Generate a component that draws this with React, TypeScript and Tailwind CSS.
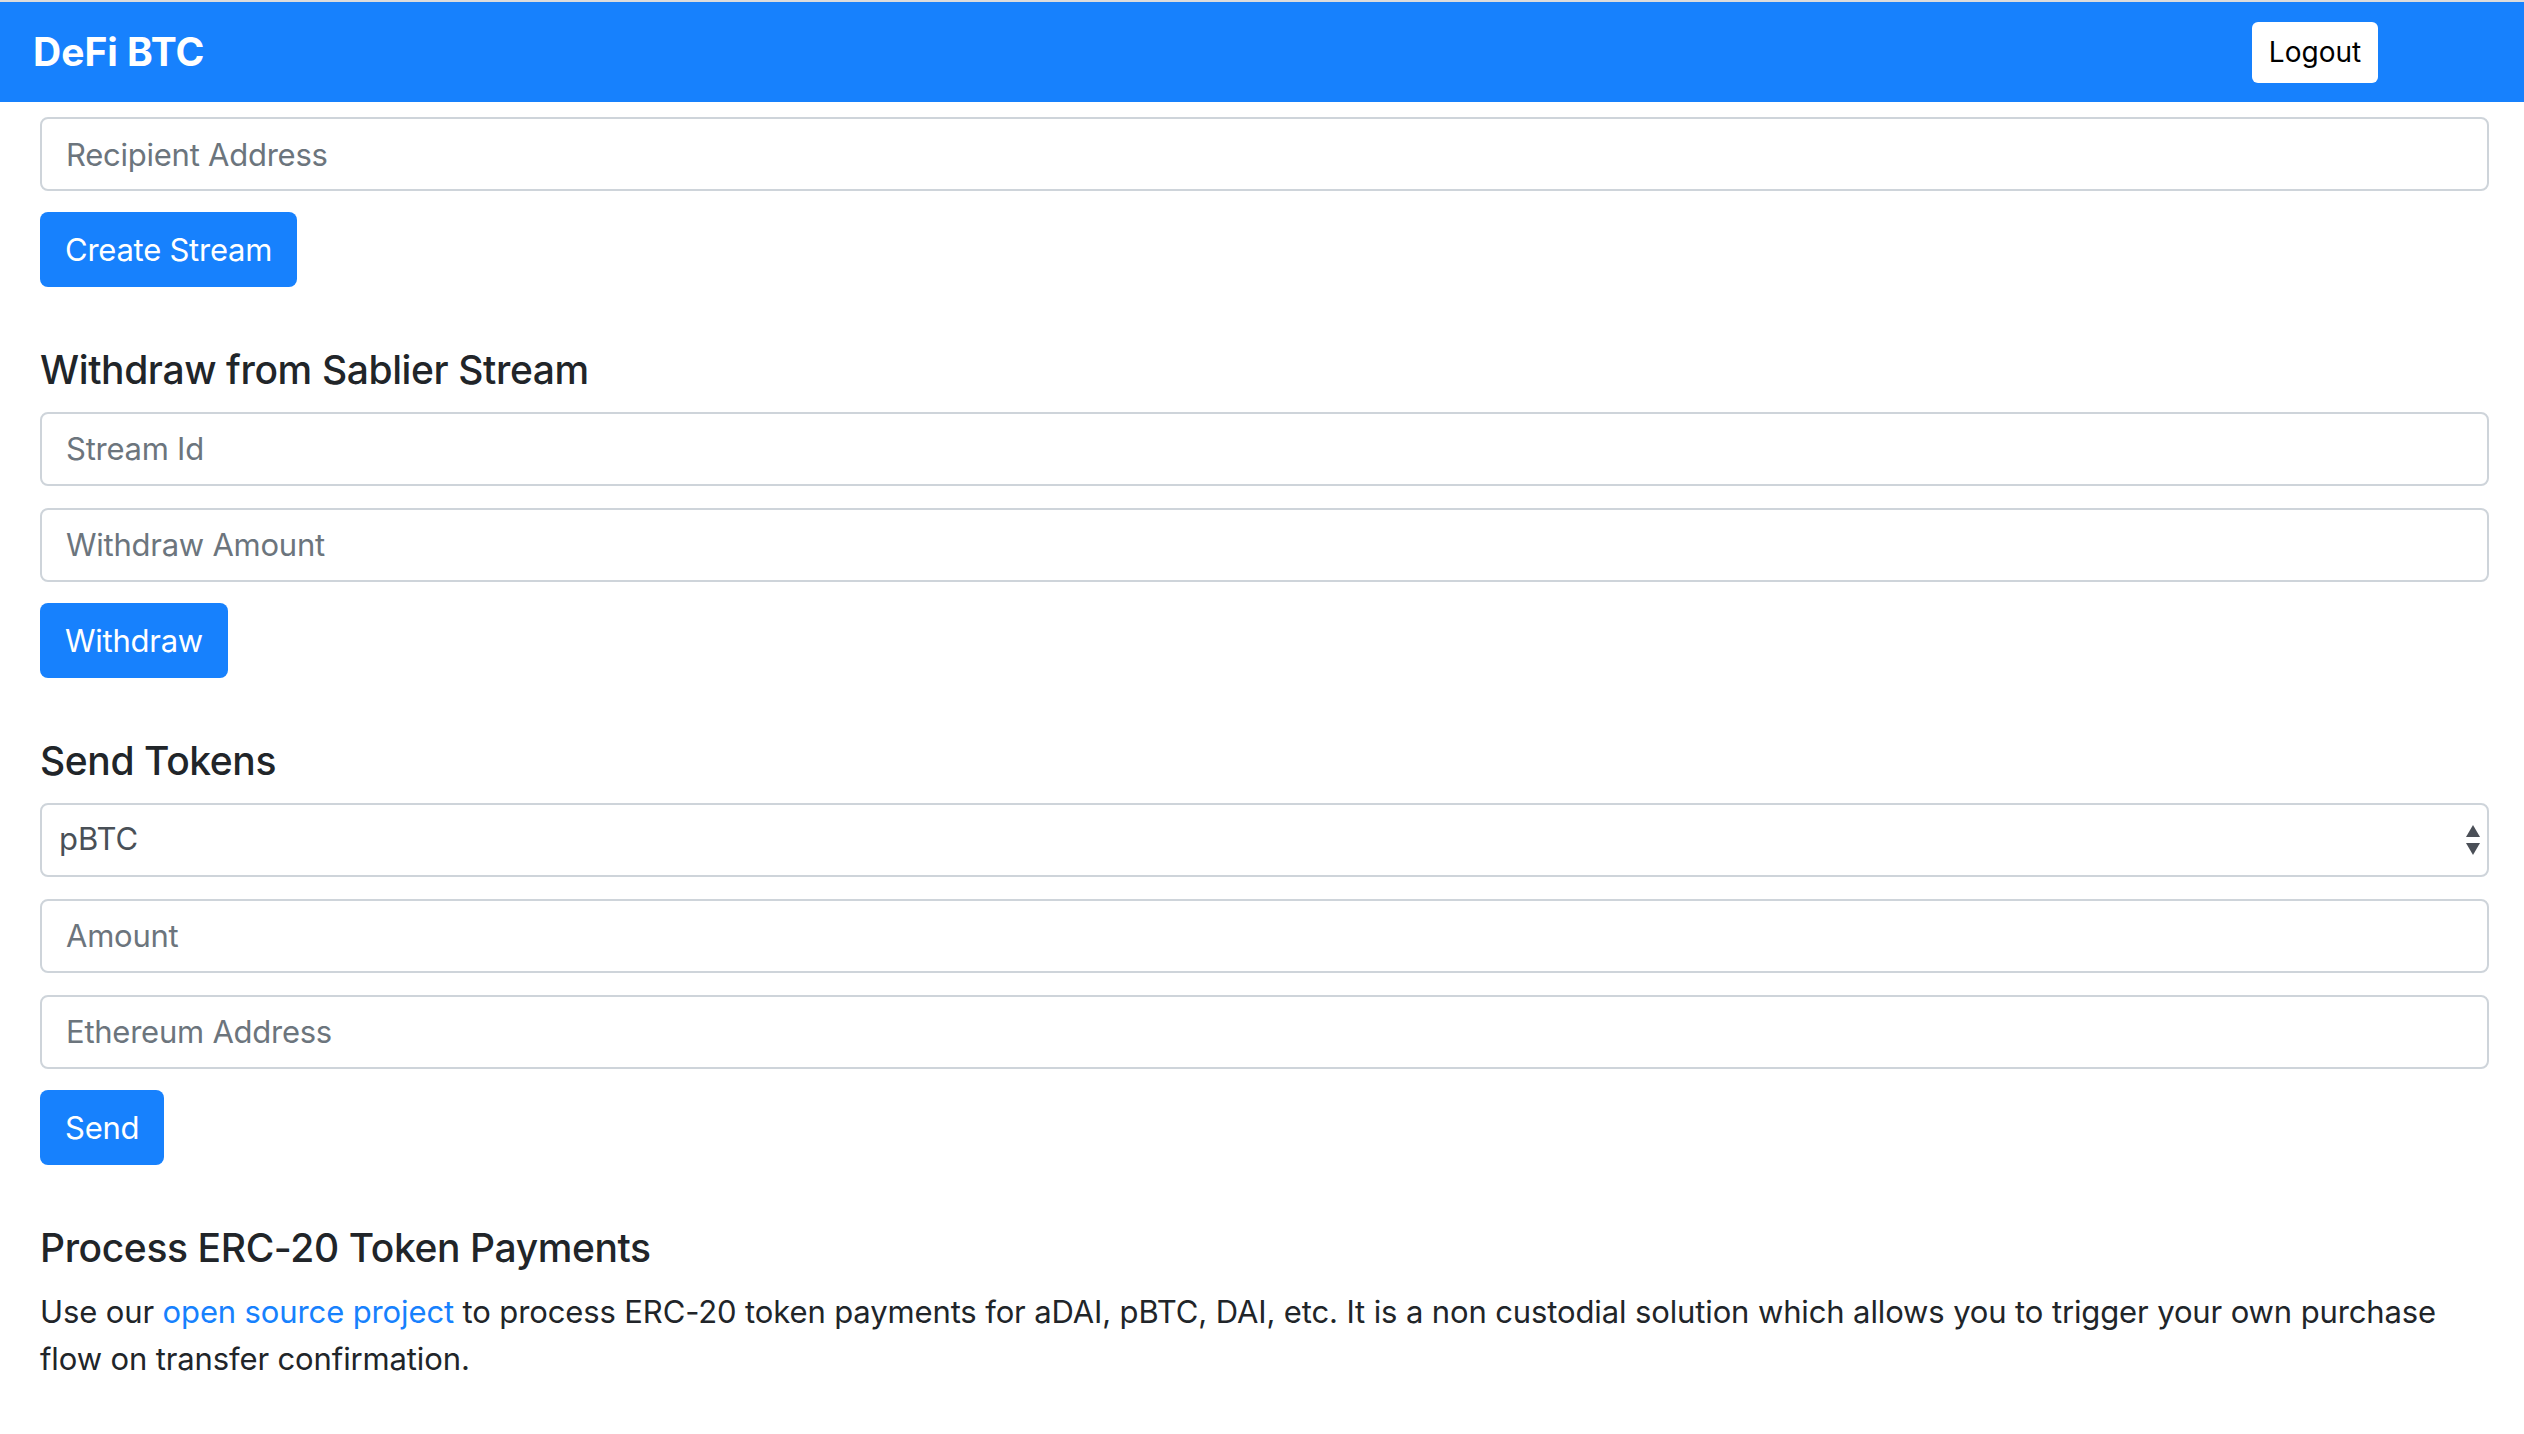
import React from 'react';

const font = { fontFamily: 'Inter, "Noto Sans", sans-serif' };

const Field = ({ placeholder }: { placeholder: string }) => (
  <input
    type="text"
    placeholder={placeholder}
    className="block w-full h-[74px] px-[24px] rounded-[8px] border-2 border-[#ced4da] bg-white text-[31px] tracking-[-0.008em] text-[#495057] placeholder:text-[#6c757d] outline-none"
  />
);

const PrimaryButton = ({ label }: { label: string }) => (
  <button className="h-[75px] px-[25px] rounded-[8px] bg-[#1781fd] text-white text-[31px] tracking-[-0.008em] leading-none">
    {label}
  </button>
);

const Heading = ({ children }: { children: React.ReactNode }) => (
  <h5 className="text-[39px] font-medium leading-[1.2] tracking-[-0.01em] text-[#212529] mt-[60px] mb-[18px]">
    {children}
  </h5>
);

export default function App() {
  return (
    <div className="min-h-screen bg-white" style={font}>
      <div className="h-[2px] bg-[#dcdcdc]" />
      <header className="h-[100px] bg-[#1781fd] flex items-center pl-[33px]">
        <span className="text-[39px] font-bold text-white">DeFi BTC</span>
        <button className="ml-auto mr-[146px] h-[61px] w-[126px] rounded-[6px] bg-white text-[28px] text-black">
          Logout
        </button>
      </header>

      <main className="pl-[40px] pr-[35px] pt-[15px]">
        <Field placeholder="Recipient Address" />
        <div className="mt-[21px]">
          <PrimaryButton label="Create Stream" />
        </div>

        <Heading>Withdraw from Sablier Stream</Heading>
        <div className="flex flex-col gap-[22px]">
          <Field placeholder="Stream Id" />
          <Field placeholder="Withdraw Amount" />
        </div>
        <div className="mt-[21px]">
          <PrimaryButton label="Withdraw" />
        </div>

        <Heading>Send Tokens</Heading>
        <div className="flex flex-col gap-[22px]">
          <div className="relative">
            <select className="block w-full h-[74px] pl-[17px] pr-[40px] rounded-[8px] border-2 border-[#ced4da] bg-white text-[31px] text-[#495057] appearance-none outline-none">
              <option>pBTC</option>
            </select>
            <svg
              className="absolute right-[9px] top-1/2 -translate-y-1/2 pointer-events-none"
              width="14"
              height="30"
              viewBox="0 0 14 30"
            >
              <polygon points="7,0 14,12 0,12" fill="#4a4f57" />
              <polygon points="0,18 14,18 7,30" fill="#4a4f57" />
            </svg>
          </div>
          <Field placeholder="Amount" />
          <Field placeholder="Ethereum Address" />
        </div>
        <div className="mt-[21px]">
          <PrimaryButton label="Send" />
        </div>

        <Heading>Process ERC-20 Token Payments</Heading>
        <p className="text-[31px] leading-[1.5] tracking-[-0.004em] text-[#212529]">
          Use our{' '}
          <a href="#" className="text-[#1781fd]">
            open source project
          </a>{' '}
          to process ERC-20 token payments for aDAI, pBTC, DAI, etc. It is a non custodial solution which allows you to
          trigger your own purchase flow on transfer confirmation.
        </p>
      </main>
    </div>
  );
}
